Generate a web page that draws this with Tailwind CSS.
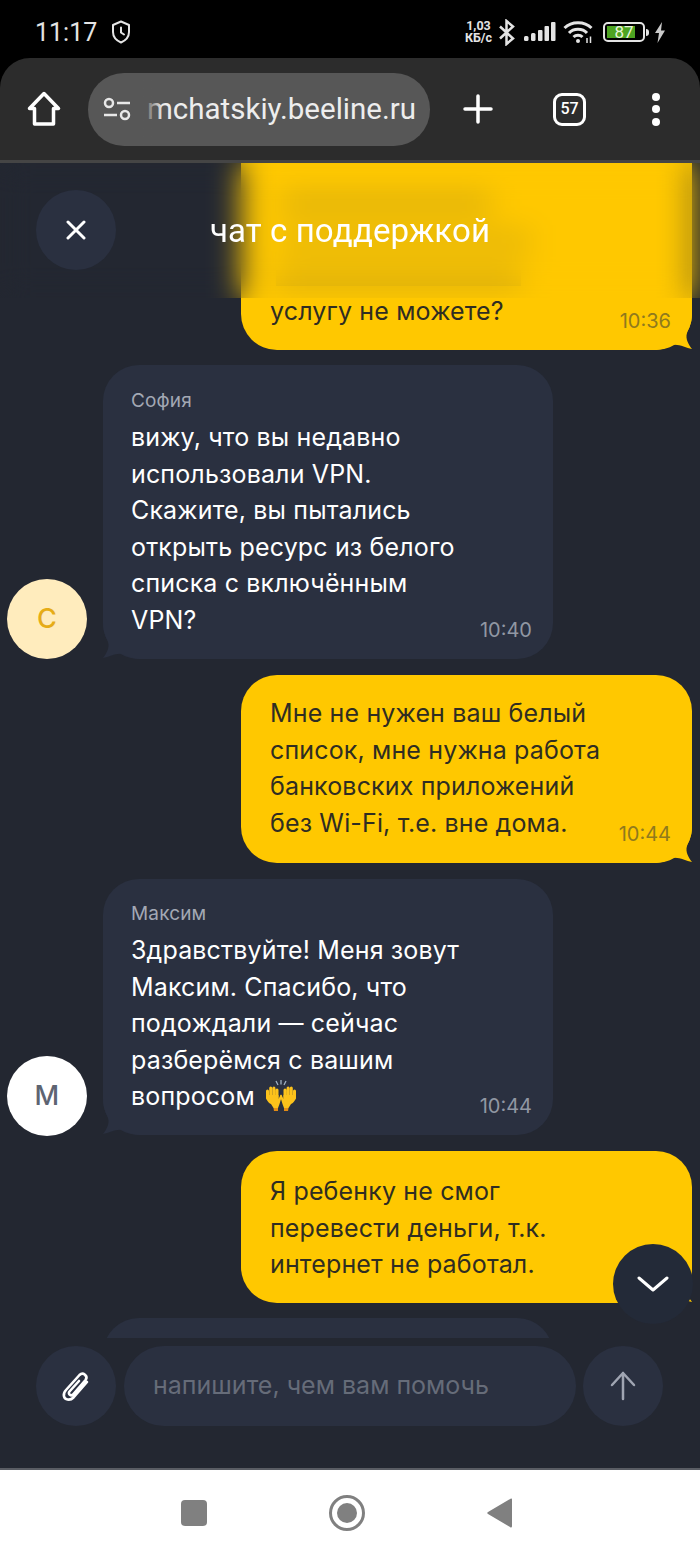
<!DOCTYPE html>
<html lang="ru">
<head>
    <meta charset="UTF-8">
    <meta name="viewport" content="width=device-width, initial-scale=1.0">
    <title>чат с поддержкой</title>
    <script src="https://cdn.jsdelivr.net/npm/@tailwindcss/browser@4"></script>
</head>
<body class="bg-black">
<div class="w-[700px] h-[1556px] flex flex-col overflow-hidden font-['Inter',sans-serif]">

    <!-- status bar -->
    <div class="h-[58px] shrink-0 bg-black flex items-center pl-[35px] pr-[34px] pt-[6px] text-[#e4e4e4] font-['Roboto',sans-serif]">
        <span class="text-[25px] leading-none w-[76px]">11:17</span>
        <svg class="w-[20px] h-[24px]" viewBox="0 0 20 24" fill="none" stroke="#e4e4e4" stroke-width="2"><path d="M10 1.5 L18 5 V12 C18 17 14.5 20.5 10 22.5 C5.5 20.5 2 17 2 12 V5 Z" stroke-linejoin="round"/><path d="M10 7.5 V12.5 L13 14.5" stroke-linecap="round"/></svg>
        <div class="ml-auto w-[29px] text-[12.5px] leading-[12px] font-bold text-center">1,03<br>КБ/с</div>
        <svg class="ml-[5px] w-[18px] h-[27px]" viewBox="0 0 18 27" fill="none" stroke="#e4e4e4" stroke-width="2.5"><path d="M2 7.5 L15 19.5 L8.5 25 V2 L15 7.5 L2 19.5"/></svg>
        <svg class="ml-[8px] w-[32px] h-[20px]" viewBox="0 0 32 20" fill="#e4e4e4"><rect x="0" y="14" width="4.5" height="5" rx="1.5"/><rect x="7" y="11" width="4.5" height="8" rx="1.5"/><rect x="14" y="8" width="4.5" height="11" rx="1"/><rect x="20.5" y="4" width="4.5" height="15" rx="1"/><rect x="27" y="0" width="4.5" height="19" rx="1"/></svg>
        <svg class="ml-[7px] w-[31px] h-[24px]" viewBox="0 0 31 24" fill="none" stroke="#e4e4e4" stroke-width="3"><path d="M1.5 8 C8.5 1 21.5 1 28.5 8"/><path d="M6 13 C10.5 8 19.5 8 24 13"/><path d="M10.5 17 C13 14.5 17 14.5 19.5 17"/><circle cx="15" cy="21" r="2" fill="#e4e4e4" stroke="none"/><path d="M24 18 V23 M27.5 16.5 V23" stroke-width="1.5"/></svg>
        <div class="ml-[9px] w-[42px] h-[20px] rounded-[5px] border-2 border-[#e4e4e4] p-[2px] relative">
            <div class="h-full w-[28px] bg-[#4da321]"></div>
            <span class="absolute inset-0 flex items-center justify-center text-[17px] leading-none text-[#e8f5dc]">87</span>
        </div>
        <div class="ml-[1px] w-[3px] h-[7px] bg-[#e4e4e4] rounded-r-sm"></div>
        <svg class="ml-[5px] w-[12px] h-[21px]" viewBox="0 0 12 21" fill="#c9c9c9"><path d="M8 0 L1 11 H5 L3.5 21 L11 8.5 H7 Z"/></svg>
    </div>

    <!-- browser toolbar -->
    <div class="h-[105px] shrink-0 bg-[#2c2c2c] rounded-t-[30px] border-b-[3px] border-[#454545] flex items-center">
        <svg class="ml-[27px] w-[34px] h-[36px]" viewBox="0 0 34 36" fill="none" stroke="#fff" stroke-width="3.5" stroke-linejoin="round"><path d="M17 2.5 L31.5 17.5 H26.5 V33 H7.5 V17.5 H2.5 Z"/></svg>
        <div class="ml-[27px] w-[342px] h-[73px] rounded-[36px] bg-[#575757] flex items-center pl-[15px] relative overflow-hidden">
            <svg class="w-[28px] h-[24px] shrink-0" viewBox="0 0 28 24" fill="none" stroke="#e8e8e8" stroke-width="2.5"><circle cx="6" cy="6" r="4"/><path d="M14 6 H27"/><path d="M1 18 H14"/><circle cx="22" cy="18" r="4"/></svg>
            <span class="ml-[16px] pt-[2px] text-[29.5px] leading-none text-[#ededed] font-['Roboto',sans-serif] whitespace-nowrap">mchatskiy.beeline.ru</span>
            <div class="absolute left-[55px] top-0 w-[20px] h-full bg-gradient-to-r from-[#575757] to-[#57575700]"></div>
        </div>
        <svg class="ml-[33px] w-[30px] h-[30px]" viewBox="0 0 30 30" stroke="#fff" stroke-width="3.5" stroke-linecap="round"><path d="M15 2 V28 M2 15 H28"/></svg>
        <div class="ml-[60px] w-[33px] h-[33px] rounded-[9px] border-[3.5px] border-white flex items-center justify-center text-white text-[16px] font-medium font-['Roboto',sans-serif]">57</div>
        <div class="ml-[66px] flex flex-col gap-[4.5px]">
            <div class="w-[8px] h-[8px] rounded-full bg-white"></div>
            <div class="w-[8px] h-[8px] rounded-full bg-white"></div>
            <div class="w-[8px] h-[8px] rounded-full bg-white"></div>
        </div>
    </div>

    <!-- chat page -->
    <div class="relative flex-1 bg-[#232731] flex flex-col border-b-2 border-[#5a5d64]">

        <!-- header over the blurred messages -->
        <div class="absolute top-0 left-0 right-0 h-[135px] z-20 backdrop-blur-[15px] flex items-center justify-center">
            <div class="absolute left-[36px] top-[27px] w-[80px] h-[80px] rounded-full bg-[#2a3040] flex items-center justify-center">
                <svg class="w-[20px] h-[20px]" viewBox="0 0 20 20" stroke="#fff" stroke-width="3" stroke-linecap="round"><path d="M2 2 L18 18 M18 2 L2 18"/></svg>
            </div>
            <span class="text-[33px] leading-none text-white font-['Roboto',sans-serif] tracking-[0.1px]">чат с поддержкой</span>
        </div>

        <!-- messages -->
        <div class="h-[1175px] shrink-0 overflow-hidden flex flex-col gap-[16px] relative text-[25px] leading-[36.5px] tracking-[0.15px]">

            <div class="relative shrink-0 ml-[241px] w-[451px] h-[227px] -mt-[40px] -mb-[1px] rounded-[36px] bg-[#ffc800] flex flex-col justify-end pl-[29px] pb-[21px] text-[#2f2d22]">
                <svg class="absolute right-0 bottom-0 w-[36px] h-[36px]" viewBox="0 0 36 36" fill="#ffc800"><path d="M36 0 C36 9 33 14 31 19 C29 25 33 31 36 35 C30 34 23 30 17 31 C12 33 5 36 0 36 V0 Z"/></svg>
                <div class="absolute left-[40px] top-[72px] w-[210px] h-[16px] bg-[#a68a20]/50"></div>
                <div class="absolute left-[40px] top-[110px] w-[250px] h-[16px] bg-[#a68a20]/40"></div>
                <div class="absolute left-[35px] top-[147px] w-[245px] h-[16px] bg-[#a68a20]/50"></div>
                <span class="relative">услугу не можете?</span>
                <span class="absolute right-[21px] bottom-[19px] text-[20px] leading-none tracking-normal text-[#8f7a1e]">10:36</span>
            </div>

            <div class="flex items-end relative shrink-0">
                <div class="absolute left-[7px] bottom-0 w-[80px] h-[80px] rounded-full bg-[#ffecbd] flex items-center justify-center text-[27px] font-medium text-[#e6ac17]">С</div>
                <div class="relative ml-[103px] w-[450px] h-[294px] rounded-[36px] bg-[#2a3040] pl-[28px] pt-[24px] text-white">
                    <svg class="absolute left-0 bottom-0 w-[36px] h-[36px] -scale-x-100" viewBox="0 0 36 36" fill="#2a3040"><path d="M36 0 C36 9 33 14 31 19 C29 25 33 31 36 35 C30 34 23 30 17 31 C12 33 5 36 0 36 V0 Z"/></svg>
                    <div class="relative text-[19px] leading-[24px] mb-[6px] text-[#a3a8b4]">София</div>
                    <div class="relative">вижу, что вы недавно<br>использовали VPN.<br>Скажите, вы пытались<br>открыть ресурс из белого<br>списка с включённым<br>VPN?</div>
                    <span class="absolute right-[21px] bottom-[19px] text-[20px] leading-none tracking-normal text-[#9197a3]">10:40</span>
                </div>
            </div>

            <div class="relative shrink-0 ml-[241px] w-[451px] h-[188px] rounded-[36px] bg-[#ffc800] pl-[29px] pt-[20px] text-[#2f2d22]">
                <svg class="absolute right-0 bottom-0 w-[36px] h-[36px]" viewBox="0 0 36 36" fill="#ffc800"><path d="M36 0 C36 9 33 14 31 19 C29 25 33 31 36 35 C30 34 23 30 17 31 C12 33 5 36 0 36 V0 Z"/></svg>
                <div class="relative">Мне не нужен ваш белый<br>список, мне нужна работа<br>банковских приложений<br>без Wi-Fi, т.е. вне дома.</div>
                <span class="absolute right-[21px] bottom-[19px] text-[20px] leading-none tracking-normal text-[#8f7a1e]">10:44</span>
            </div>

            <div class="flex items-end relative shrink-0">
                <div class="absolute left-[7px] -bottom-[1px] w-[80px] h-[80px] rounded-full bg-white flex items-center justify-center text-[27px] font-medium text-[#5d6472]">М</div>
                <div class="relative ml-[103px] w-[450px] h-[256px] rounded-[36px] bg-[#2a3040] pl-[28px] pt-[23px] text-white">
                    <svg class="absolute left-0 bottom-0 w-[36px] h-[36px] -scale-x-100" viewBox="0 0 36 36" fill="#2a3040"><path d="M36 0 C36 9 33 14 31 19 C29 25 33 31 36 35 C30 34 23 30 17 31 C12 33 5 36 0 36 V0 Z"/></svg>
                    <div class="relative text-[19px] leading-[24px] mb-[6px] text-[#a3a8b4]">Максим</div>
                    <div class="relative">Здравствуйте! Меня зовут<br>Максим. Спасибо, что<br>подождали — сейчас<br>разберёмся с вашим<br>вопросом
                        <svg class="inline-block ml-[3px] w-[32px] h-[31px] align-[-6px]" viewBox="0 0 32 31" fill="none">
                            <path d="M16 0 V4.5 M11 1 L13 5 M21 1 L19 5" stroke="#9fb0c3" stroke-width="1.3"/>
                            <path d="M2.5 18 V11 M5.7 18 V8 M8.9 18 V8 M12 18 V10" stroke="#fcc21b" stroke-width="3" stroke-linecap="round"/>
                            <path d="M1 15 H13.5 L13.5 19 L15.5 15 C16.5 14 17 16 16.5 17.5 L14.5 24 L13 28 H8.5 L6 24 C3 22.5 1 20 1 15 Z" fill="#fcc21b"/>
                            <path d="M8.5 28 H13 V31 H9 Z" fill="#e48c15"/>
                            <g transform="matrix(-1 0 0 1 32 0)">
                                <path d="M2.5 18 V11 M5.7 18 V8 M8.9 18 V8 M12 18 V10" stroke="#fcc21b" stroke-width="3" stroke-linecap="round"/>
                                <path d="M1 15 H13.5 L13.5 19 L15.5 15 C16.5 14 17 16 16.5 17.5 L14.5 24 L13 28 H8.5 L6 24 C3 22.5 1 20 1 15 Z" fill="#fcc21b"/>
                                <path d="M8.5 28 H13 V31 H9 Z" fill="#e48c15"/>
                            </g>
                        </svg>
                    </div>
                    <span class="absolute right-[21px] bottom-[19px] text-[20px] leading-none tracking-normal text-[#9197a3]">10:44</span>
                </div>
            </div>

            <div class="relative shrink-0 ml-[241px] w-[451px] h-[152px] -mb-[1px] rounded-[36px] bg-[#ffc800] pl-[29px] pt-[22px] text-[#2f2d22]">
                <svg class="absolute right-0 bottom-0 w-[36px] h-[36px]" viewBox="0 0 36 36" fill="#ffc800"><path d="M36 0 C36 9 33 14 31 19 C29 25 33 31 36 35 C30 34 23 30 17 31 C12 33 5 36 0 36 V0 Z"/></svg>
                <div class="relative">Я ребенку не смог<br>перевести деньги, т.к.<br>интернет не работал.</div>
            </div>

            <div class="shrink-0 ml-[103px] w-[450px] h-[80px] rounded-[36px] bg-[#2a3040]"></div>

            <!-- scroll down button -->
            <div class="absolute left-[613px] top-[1081px] w-[80px] h-[80px] rounded-full bg-[#232a38] flex items-center justify-center">
                <svg class="w-[32px] h-[18px]" viewBox="0 0 32 18" fill="none" stroke="#fff" stroke-width="3" stroke-linecap="round" stroke-linejoin="round"><path d="M2 3 L16 15 L30 3"/></svg>
            </div>
        </div>

        <!-- input row -->
        <div class="flex items-center mt-[8px] pl-[36px]">
            <div class="w-[80px] h-[80px] rounded-full bg-[#2a3040] flex items-center justify-center">
                <svg class="w-[30px] h-[32px]" viewBox="0 0 30 32" fill="none" stroke="#fff" stroke-width="2.6" stroke-linecap="round" stroke-linejoin="round"><path d="M18 11 L8.5 21.5 C6.5 24 10 26.5 12 24.5 L24.5 10 C27.5 6 22 1.5 18.5 5 L5 20 C1 24.5 3 29 6.5 29.5 C9 30 11 29 12.5 27.5 L26 12"/></svg>
            </div>
            <div class="ml-[8px] w-[452px] h-[80px] rounded-[40px] bg-[#2a3040] flex items-center pl-[29px] text-[25px] text-[#666c79]">напишите, чем вам помочь</div>
            <div class="ml-[7px] w-[80px] h-[80px] rounded-full bg-[#2a3040] flex items-center justify-center">
                <svg class="w-[26px] h-[30px]" viewBox="0 0 26 30" fill="none" stroke="#a0a5b2" stroke-width="2.5" stroke-linecap="round" stroke-linejoin="round"><path d="M13 28 V2 M2 14 L13 2 L24 14"/></svg>
            </div>
        </div>
    </div>

    <!-- android nav bar -->
    <div class="h-[86px] shrink-0 bg-white flex items-center pb-[1px]">
        <div class="ml-[181px] w-[26px] h-[26px] rounded-[4px] bg-[#808080]"></div>
        <div class="ml-[122px] w-[36px] h-[36px] rounded-full border-[3px] border-[#808080] flex items-center justify-center">
            <div class="w-[20px] h-[20px] rounded-full bg-[#808080]"></div>
        </div>
        <svg class="ml-[122px] w-[26px] h-[30px]" viewBox="0 0 26 30" fill="#808080"><path d="M24 0.5 C25 0.5 25 1 25 2 V28 C25 29.5 24 30 23 29 L1 16 C0 15.5 0 14.5 1 14 Z"/></svg>
    </div>
</div>
</body>
</html>
